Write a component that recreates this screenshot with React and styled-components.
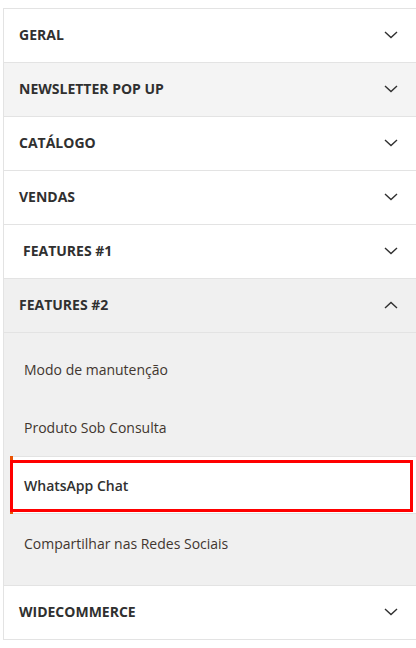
import React from 'react';
import styled, { createGlobalStyle } from 'styled-components';

const GlobalStyle = createGlobalStyle`
  body {
    margin: 0;
    background: #ffffff;
    font-family: "Open Sans", "Liberation Sans", sans-serif;
  }
`;

const sections = [
  { title: 'GERAL' },
  { title: 'NEWSLETTER POP UP', hover: true },
  { title: 'CATÁLOGO' },
  { title: 'VENDAS' },
  { title: 'FEATURES #1', indent: true },
  {
    title: 'FEATURES #2',
    open: true,
    items: ['Modo de manutenção', 'Produto Sob Consulta', 'WhatsApp Chat', 'Compartilhar nas Redes Sociais'],
    active: 2,
  },
  { title: 'WIDECOMMERCE' },
];

function Chevron({ up }) {
  return (
    <svg width="14" height="8" viewBox="0 0 14 8" fill="none">
      <path
        d={up ? 'M1 7L7 1.5L13 7' : 'M1 1L7 6.5L13 1'}
        stroke="#303030"
        strokeWidth="1.4"
      />
    </svg>
  );
}

export default function App() {
  return (
    <>
      <GlobalStyle />
      <Panel>
        {sections.map((s) => (
          <Section key={s.title}>
            <Header $shade={s.open ? '#f0f0f0' : s.hover ? '#f4f4f4' : '#ffffff'}>
              <Title $indent={s.indent}>{s.title}</Title>
              <Chevron up={s.open} />
            </Header>
            {s.open && (
              <ItemList>
                {s.items.map((it, i) => (
                  <Item key={it} $active={i === s.active}>
                    {it}
                  </Item>
                ))}
              </ItemList>
            )}
          </Section>
        ))}
      </Panel>
    </>
  );
}

const Panel = styled.div`
  margin: 8px 0 0 3px;
  width: 420px;
  border-left: 1px solid #e3e3e3;
  border-top: 1px solid #e3e3e3;
`;

const Section = styled.div`
  border-bottom: 1px solid #e3e3e3;
`;

const Header = styled.div`
  height: 53px;
  display: flex;
  align-items: center;
  justify-content: space-between;
  padding: 0 22px 2px 15px;
  box-sizing: border-box;
  width: 416px;
  background: ${(p) => p.$shade};
`;

const Title = styled.span`
  font-size: 14px;
  font-weight: 700;
  color: #303030;
  padding-left: ${(p) => (p.$indent ? '4px' : '0')};
`;

const ItemList = styled.div`
  background: #f0f0f0;
  border-top: 1px solid #e3e3e3;
  padding: 7px 0 13px;
  width: 416px;
  box-sizing: border-box;
`;

const Item = styled.div`
  position: relative;
  height: 58px;
  display: flex;
  align-items: center;
  padding-left: 20px;
  font-size: 14px;
  color: ${(p) => (p.$active ? '#303030' : '#41362f')};
  font-weight: ${(p) => (p.$active ? 600 : 400)};
  box-sizing: border-box;
  ${(p) =>
    p.$active &&
    `
    background: #ffffff;
    border-top: 1px solid #e3e3e3;
    border-bottom: 1px solid #e3e3e3;
    margin-left: 6px;
    padding-left: 14px;
    &::before {
      content: '';
      position: absolute;
      left: 0;
      top: -1px;
      bottom: -1px;
      width: 3px;
      background: #eb5202;
    }
    &::after {
      content: '';
      position: absolute;
      left: 0;
      right: 7px;
      top: 3px;
      bottom: 1px;
      border: 3px solid #ff0000;
    }
  `}
`;
